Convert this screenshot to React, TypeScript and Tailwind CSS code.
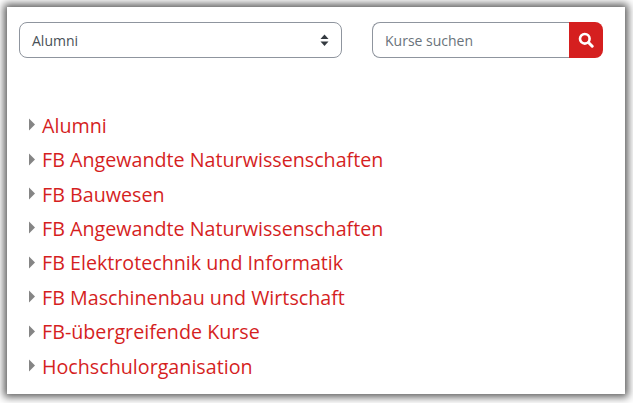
const categories = [
  "Alumni",
  "FB Angewandte Naturwissenschaften",
  "FB Bauwesen",
  "FB Angewandte Naturwissenschaften",
  "FB Elektrotechnik und Informatik",
  "FB Maschinenbau und Wirtschaft",
  "FB-übergreifende Kurse",
  "Hochschulorganisation",
];

export default function App() {
  return (
    <div className="w-[633px] h-[403px] bg-white p-[7px] pr-[8px] pb-[9px] overflow-hidden font-['Open_Sans','Noto_Sans',sans-serif]">
      <div className="h-full bg-white shadow-[0_0_8px_3px_rgba(0,0,0,0.65)] pt-[15px] pl-[12px] pr-[22px]">
        <div className="flex justify-between">
          <div className="w-[323px] h-[36px] border border-[#8f959e] rounded-[8px] flex items-center justify-between px-[12px] text-[14px] text-[#495057]">
            <span>Alumni</span>
            <svg width="9" height="14" viewBox="0 0 9 14" className="fill-[#343a40]">
              <path d="M4.5 1.5 8.5 6H0.5Z" />
              <path d="M4.5 13 0.5 8.5H8.5Z" />
            </svg>
          </div>
          <div className="flex h-[36px] w-[231px]">
            <div className="flex-1 border border-r-0 border-[#8f959e] rounded-l-[8px] flex items-center pl-[12px] text-[14px] text-[#6a737b]">
              Kurse suchen
            </div>
            <button className="w-[34px] bg-[#d51f1f] rounded-r-[8px] flex items-center justify-center">
              <svg width="16" height="16" viewBox="0 0 16 16" fill="none" stroke="white">
                <circle cx="6.8" cy="6.8" r="4.8" strokeWidth="2.6" />
                <path d="M10.5 10.5 14.2 14.2" strokeWidth="3" strokeLinecap="round" />
              </svg>
            </button>
          </div>
        </div>
        <ul className="mt-[50.6px] pl-[10px]">
          {categories.map((name, i) => (
            <li key={i} className="h-[34.4px] flex items-center gap-[7px]">
              <svg width="6" height="13" viewBox="0 0 6 13" className="fill-[#858585] -mt-[2px]">
                <path d="M0 0.5 6 6.5 0 12.5Z" />
              </svg>
              <a className="text-[19.7px] text-[#d51f1f] leading-[30px]">{name}</a>
            </li>
          ))}
        </ul>
      </div>
    </div>
  );
}
